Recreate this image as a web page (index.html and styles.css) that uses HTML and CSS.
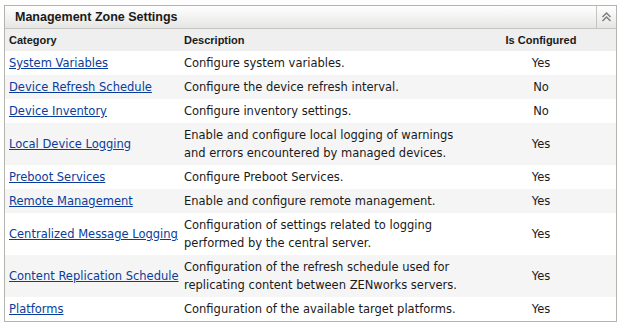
FILE: index.html
```html
<!DOCTYPE html>
<html>
<head>
<meta charset="utf-8">
<link rel="stylesheet" href="styles.css">
</head>
<body>
<div class="panel">
  <div class="titlebar">
    <div class="title">Management Zone Settings</div>
    <div class="collapse">
      <svg width="11" height="11" viewBox="0 0 11 11"><path d="M1.5 5 L5.5 1 L9.5 5 M1.5 9 L5.5 5 L9.5 9" fill="none" stroke="#7a7a7a" stroke-width="1.4"/></svg>
    </div>
  </div>
  <table class="grid">
    <colgroup><col class="w1"><col class="w2"><col class="w3"></colgroup>
    <thead>
      <tr><th>Category</th><th>Description</th><th class="c3">Is Configured</th></tr>
    </thead>
    <tbody>
      <tr><td><a href="#">System Variables</a></td><td>Configure system variables.</td><td class="c3">Yes</td></tr>
      <tr><td><a href="#">Device Refresh Schedule</a></td><td>Configure the device refresh interval.</td><td class="c3">No</td></tr>
      <tr><td><a href="#">Device Inventory</a></td><td>Configure inventory settings.</td><td class="c3">No</td></tr>
      <tr><td><a href="#">Local Device Logging</a></td><td>Enable and configure local logging of warnings<br>and errors encountered by managed devices.</td><td class="c3">Yes</td></tr>
      <tr><td><a href="#">Preboot Services</a></td><td>Configure Preboot Services.</td><td class="c3">Yes</td></tr>
      <tr><td><a href="#">Remote Management</a></td><td>Enable and configure remote management.</td><td class="c3">Yes</td></tr>
      <tr><td><a href="#">Centralized Message Logging</a></td><td>Configuration of settings related to logging<br>performed by the central server.</td><td class="c3">Yes</td></tr>
      <tr><td><a href="#">Content Replication Schedule</a></td><td>Configuration of the refresh schedule used for<br>replicating content between ZENworks servers.</td><td class="c3">Yes</td></tr>
      <tr><td><a href="#">Platforms</a></td><td>Configuration of the available target platforms.</td><td class="c3">Yes</td></tr>
    </tbody>
  </table>
</div>
</body>
</html>
```
FILE: styles.css
```css
html, body { margin: 0; padding: 0; background: #fff; }
body { padding: 5px 0 0 4px; font-family: "DejaVu Sans", Verdana, sans-serif; font-size: 11.5px; color: #1a1a1a; }
.panel { width: 611px; border: 1px solid #b4b4ae; background: #fff; }
.titlebar { display: flex; height: 22px; background: linear-gradient(#ffffff, #e6e6e4); border-bottom: 1px solid #c4c4c0; }
.title { flex: 1; padding-left: 10px; line-height: 22px; font-family: "Liberation Sans", Arial, sans-serif; font-size: 12.5px; font-weight: bold; color: #1a1a1a; }
.collapse { width: 19px; border-left: 1px solid #c4c4c0; display: flex; align-items: center; justify-content: center; }
.grid { width: 100%; border-collapse: collapse; table-layout: fixed; }
.w1 { width: 175px; }
.w2 { width: 286px; }
.grid th { background: #efefef; font-family: "Liberation Sans", Arial, sans-serif; font-size: 11px; font-weight: bold; text-align: left; height: 22px; padding: 0 4px; }
.grid td { padding: 3px 4px; line-height: 18px; vertical-align: middle; white-space: nowrap; }
.grid tbody tr:nth-child(even) td { background: #f5f5f5; }
.grid .c3 { text-align: center; }
a { color: #0a3c9c; text-decoration: underline; }
```
